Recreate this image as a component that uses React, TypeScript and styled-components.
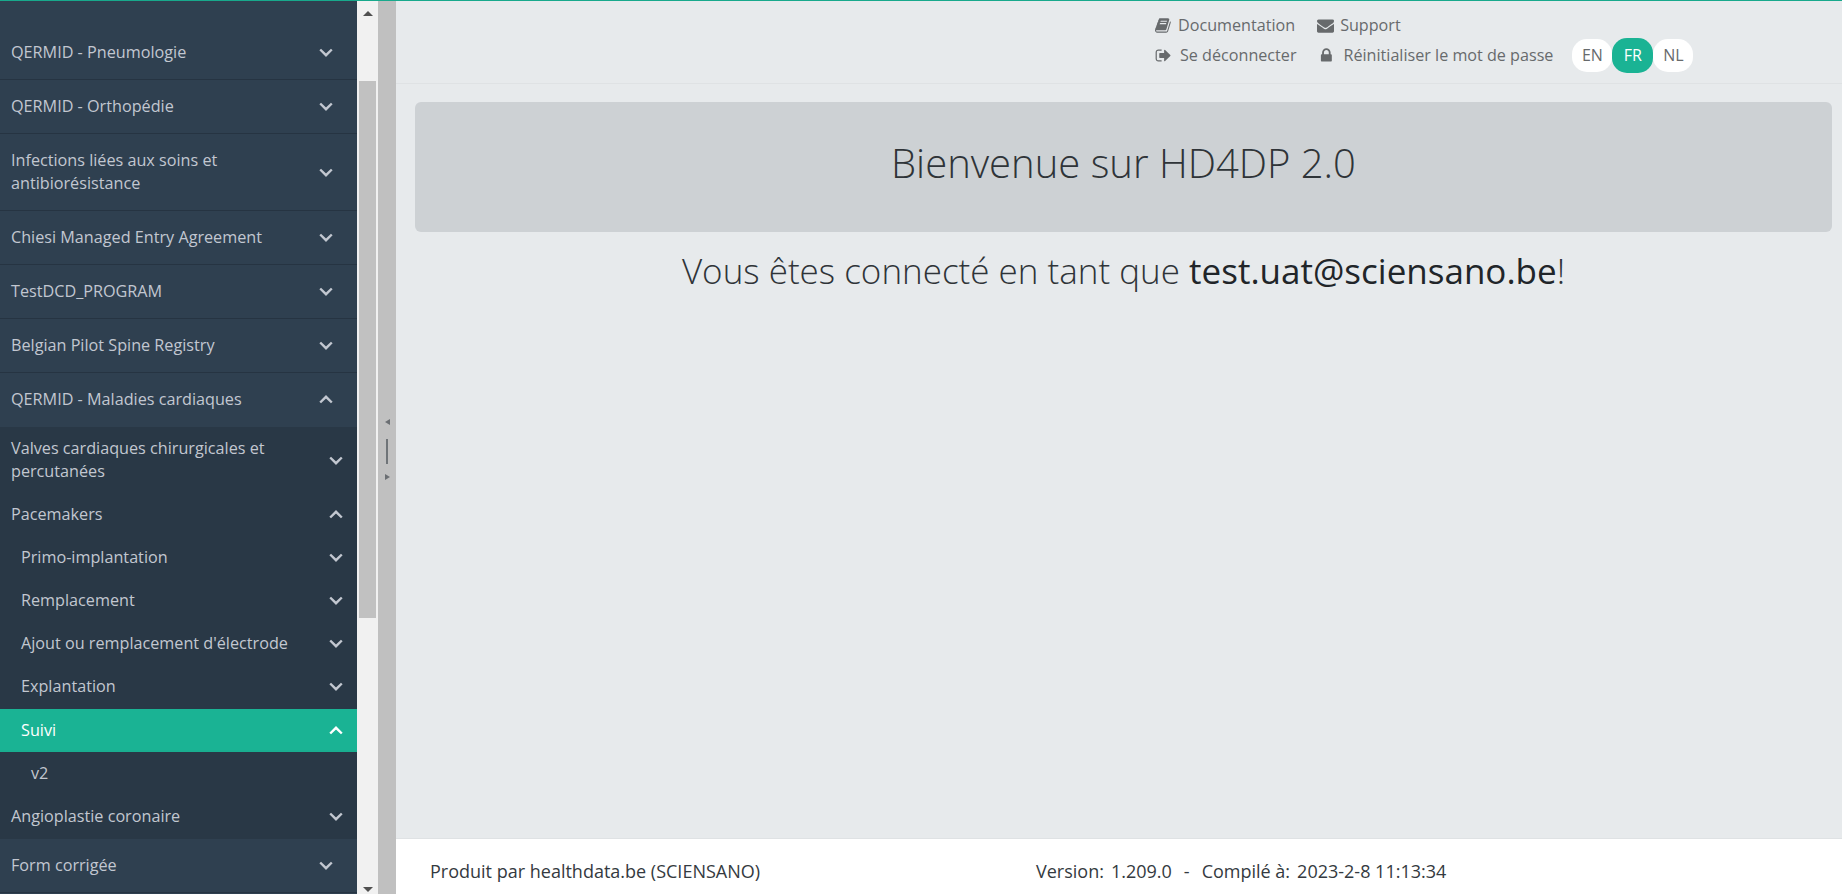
import React from "react";
import styled, { createGlobalStyle } from "styled-components";

const Global = createGlobalStyle`
  html, body { margin: 0; padding: 0; height: 100%; overflow: hidden; }
  #root { height: 100%; }
  * { box-sizing: border-box; }
  body { font-family: "Open Sans", "Liberation Sans", sans-serif; font-size: 16px; }
`;

const Page = styled.div`
  display: flex; height: 894px; width: 1842px;
  border-top: 1px solid #18a98c; background: #e7eaec; overflow: hidden;
`;
const Side = styled.nav`
  width: 357px; flex: none; background: #2f4050; padding-top: 25px; height: 893px; overflow: hidden;
`;
const Row = styled.div<{ $depth?: number; $sub?: boolean; $active?: boolean; $open?: boolean }>`
  display: flex; align-items: center; justify-content: space-between;
  font-size: 16.2px; line-height: 23px;
  color: ${p => (p.$active ? "#fff" : "#c2c7d0")};
  background: ${p => (p.$active ? "#1ab394" : "transparent")};
  padding: ${p => (p.$sub
    ? `10px 14px 10px ${11 + (p.$depth || 0) * 10}px`
    : `15px 24px 15px 11px`)};
  border-bottom: ${p => (p.$sub ? "none" : p.$open ? "1px solid #2f4050" : "1px solid #263442")};
  ${p => (p.$active ? "margin-top: 1px; box-shadow: inset 0 -2px 0 #19ae90;" : "")}
`;
const Label = styled.span`max-width: 290px;`;
const SubList = styled.div`background: #293846; padding-bottom: 1px;`;
const Chev = styled.svg`width: 14px; height: 9px; flex: none; overflow: visible;`;
const Chevron = ({ up }: { up?: boolean }) => (
  <Chev viewBox="0 0 14 9" fill="none" stroke="currentColor" strokeWidth="2.4">
    <path d={up ? "M1.200 7.500 7 1.800l5.800 5.700" : "M1.200 1.500 7 7.200l5.800-5.700"} />
  </Chev>
);

const Track = styled.div`
  width: 21px; flex: none; background: #f1f1f1; display: flex; flex-direction: column;
  align-items: center; height: 893px; position: relative;
`;
const Thumb = styled.div`width: 17px; height: 537px; margin-top: 65px; background: #c1c1c1;`;
const ArrowTop = styled.div`
  margin-top: 10px; width: 0; height: 0;
  border-left: 5px solid transparent; border-right: 5px solid transparent; border-bottom: 5px solid #505050;
`;
const ArrowBottom = styled.div`
  position: absolute; bottom: 2px; width: 0; height: 0;
  border-left: 5px solid transparent; border-right: 5px solid transparent; border-top: 5px solid #505050;
`;
const Resizer = styled.div`
  width: 18px; flex: none; background: #c0c0c0; display: flex; flex-direction: column;
  align-items: center; justify-content: center;
  height: 893px; padding-top: 3px;
`;
const Tri = styled.div<{ $right?: boolean }>`
  width: 0; height: 0; border-top: 3px solid transparent; border-bottom: 3px solid transparent;
  ${p => (p.$right ? "border-left: 5px solid #6b6f73;" : "border-right: 5px solid #6b6f73;")}
`;
const Grip = styled.div`width: 2px; height: 25px; background: #6f7478; margin: 14px 0 10px;`;

const Main = styled.main`flex: 1; display: flex; flex-direction: column; min-width: 0;`;
const Top = styled.header`
  height: 83px; flex: none; border-bottom: 1px solid #dfe2e4;
  padding: 9px 0 0 759px; display: flex; flex-direction: column;
`;
const LinkRow = styled.div`display: flex; align-items: center; height: 30px; gap: 22px;`;
const LinkItem = styled.a`
  display: flex; align-items: center; color: #676a6c; font-size: 16.15px; line-height: 30px; height: 30px;
`;
const Ic = styled.svg<{ $mr: number }>`width: 17px; height: 17px; fill: #676a6c; flex: none; margin-right: ${p => p.$mr}px;`;
const Langs = styled.div`display: flex; margin-left: -3px; align-items: center;`;
const Lang = styled.span<{ $on?: boolean }>`
  width: ${p => (p.$on ? 41 : 40)}px; height: ${p => (p.$on ? 35 : 33)}px; border-radius: 15px;
  display: flex; align-items: center; justify-content: center; font-size: 16px;
  color: ${p => (p.$on ? "#fff" : "#676a6c")}; background: ${p => (p.$on ? "#1ab394" : "#fff")};
`;
const Content = styled.div`flex: 1; padding: 18px 10px 0 19px;`;
const Jumbo = styled.div`
  height: 130px; padding-bottom: 9px; border-radius: 6px; background: #cdd1d4; display: flex; align-items: center; justify-content: center;
  font-weight: 300; font-size: 40px; color: #2f3438;
`;
const Sub = styled.h2`
  margin: 14px 0 0; text-align: center; font-weight: 300; font-size: 35px; line-height: 50px; color: #2f3438;
  strong { font-weight: 400; color: #212529; }
`;
const Footer = styled.footer`
  height: 56px; flex: none; background: #fff; border-top: 1px solid #dfe2e4; display: flex; align-items: center;
  padding: 9px 0 0 34px; font-size: 18px; color: #343a40;
`;
const FootLeft = styled.span`width: 606px;`;
const FootMeta = styled.div`display: flex; gap: 12px;`;
const FootPair = styled.span`display: flex; gap: 7px;`;

const top1 = ["QERMID - Pneumologie", "QERMID - Orthopédie", "Infections liées aux soins et antibiorésistance",
  "Chiesi Managed Entry Agreement", "TestDCD_PROGRAM", "Belgian Pilot Spine Registry"];

export default function App() {
  return (
    <Page>
      <Global />
      <Side>
        {top1.map(t => (
          <Row key={t}><Label>{t}</Label><Chevron /></Row>
        ))}
        <Row $open><Label>QERMID - Maladies cardiaques</Label><Chevron up /></Row>
        <SubList>
          <Row $sub><Label>Valves cardiaques chirurgicales et percutanées</Label><Chevron /></Row>
          <Row $sub><Label>Pacemakers</Label><Chevron up /></Row>
          <Row $sub $depth={1}><Label>Primo-implantation</Label><Chevron /></Row>
          <Row $sub $depth={1}><Label>Remplacement</Label><Chevron /></Row>
          <Row $sub $depth={1}><Label>Ajout ou remplacement d'électrode</Label><Chevron /></Row>
          <Row $sub $depth={1}><Label>Explantation</Label><Chevron /></Row>
          <Row $sub $depth={1} $active><Label>Suivi</Label><Chevron up /></Row>
          <Row $sub $depth={2}><Label>v2</Label></Row>
          <Row $sub><Label>Angioplastie coronaire</Label><Chevron /></Row>
        </SubList>
        <Row><Label>Form corrigée</Label><Chevron /></Row>
      </Side>
      <Track>
        <ArrowTop />
        <Thumb />
        <ArrowBottom />
      </Track>
      <Resizer>
        <Tri />
        <Grip />
        <Tri $right />
      </Resizer>
      <Main>
        <Top>
          <LinkRow>
            <LinkItem>
              <Ic $mr={6} viewBox="0 0 1792 1792"><path d="M1639 478q40 57 18 129l-275 906q-19 64-76.500 107.500t-122.500 43.500h-923q-77 0-148.500-53.500t-99.500-131.500q-24-67-2-127 0-4 3-27t4-37q1-8-3-21.500t-3-19.500q2-11 8-21t16.500-23.500 16.500-23.500q23-38 45-91.500t30-91.500q3-10 .5-30t-.5-28q3-11 17-28t17-23q21-36 42-92t25-90q1-9-2.500-32t.5-28q4-13 22-30.500t22-22.500q19-26 42.500-84.500t27.500-96.500q1-8-3-25.500t-2-26.500q2-8 9-18t18-23 17-21q8-12 16.500-30.500t15-35 16-36 19.500-32 26.500-23.500 36-11.500 47.500 5.500l-1 3q38-9 51-9h761q74 0 114 56t18 130l-274 906q-36 119-71.500 153.500t-128.500 34.500h-869q-27 0-38 15-11 16-1 43 24 70 144 70h923q29 0 56-15.500t35-41.500l300-987q7-22 5-57 38 15 59 43zm-1064 2q-4 13 2 22.500t20 9.500h608q13 0 25.500-9.500t16.500-22.500l21-64q4-13-2-22.500t-20-9.500h-608q-13 0-25.500 9.500t-16.500 22.500zm-83 256q-4 13 2 22.500t20 9.500h608q13 0 25.500-9.500t16.500-22.500l21-64q4-13-2-22.500t-20-9.500h-608q-13 0-25.500 9.500t-16.500 22.500z" /></Ic>
              Documentation
            </LinkItem>
            <LinkItem>
              <Ic $mr={6} viewBox="0 0 1792 1792"><path d="M1792 710v794q0 66-47 113t-113 47h-1472q-66 0-113-47t-47-113v-794q44 49 101 87 362 246 497 345 57 42 92.500 65.500t94.500 48 110 24.500h2q51 0 110-24.500t94.500-48 92.500-65.500q170-123 498-345 57-39 100-87zm0-294q0 79-49 151t-122 123q-376 261-468 325-10 7-42.500 30.500t-54 38-52 32.500-57.500 27-50 9h-2q-23 0-50-9t-57.500-27-52-32.500-54-38-42.500-30.500q-91-64-262-182.500t-205-142.500q-62-42-117-115.500t-55-136.500q0-78 41.500-130t118.500-52h1472q65 0 112.500 47t47.500 113z" /></Ic>
              Support
            </LinkItem>
          </LinkRow>
          <LinkRow>
            <LinkItem>
              <Ic $mr={8} viewBox="0 0 1792 1792"><path d="M704 1440q0 4 1 20t.5 26.500-3 23.500-10 19.500-20.500 6.500h-320q-119 0-203.500-84.500t-84.500-203.500v-704q0-119 84.500-203.500t203.500-84.500h320q13 0 22.500 9.500t9.500 22.500q0 4 1 20t.5 26.500-3 23.500-10 19.500-20.500 6.500h-320q-66 0-113 47t-47 113v704q0 66 47 113t113 47h312l11.500 1 11.500 3 8 5.500 7 9 2 13.500zm928-544q0 26-19 45l-544 544q-19 19-45 19t-45-19-19-45v-288h-448q-26 0-45-19t-19-45v-384q0-26 19-45t45-19h448v-288q0-26 19-45t45-19 45 19l544 544q19 19 19 45z" /></Ic>
              Se déconnecter
            </LinkItem>
            <LinkItem>
              <Ic $mr={8} viewBox="0 0 1792 1792"><path d="M520 768h512v-192q0-106-75-181t-181-75-181 75-75 181v192zm832 96v576q0 40-28 68t-68 28h-960q-40 0-68-28t-28-68v-576q0-40 28-68t68-28h32v-192q0-184 132-316t316-132 316 132 132 316v192h32q40 0 68 28t28 68z" /></Ic>
              Réinitialiser le mot de passe
            </LinkItem>
            <Langs>
              <Lang>EN</Lang>
              <Lang $on>FR</Lang>
              <Lang>NL</Lang>
            </Langs>
          </LinkRow>
        </Top>
        <Content>
          <Jumbo>Bienvenue sur HD4DP 2.0</Jumbo>
          <Sub>Vous êtes connecté en tant que <strong>test.uat@sciensano.be</strong>!</Sub>
        </Content>
        <Footer>
          <FootLeft>Produit par healthdata.be (SCIENSANO)</FootLeft>
          <FootMeta>
            <FootPair><span>Version:</span><span>1.209.0</span></FootPair>
            <span>-</span>
            <FootPair><span>Compilé à:</span><span>2023-2-8 11:13:34</span></FootPair>
          </FootMeta>
        </Footer>
      </Main>
    </Page>
  );
}
